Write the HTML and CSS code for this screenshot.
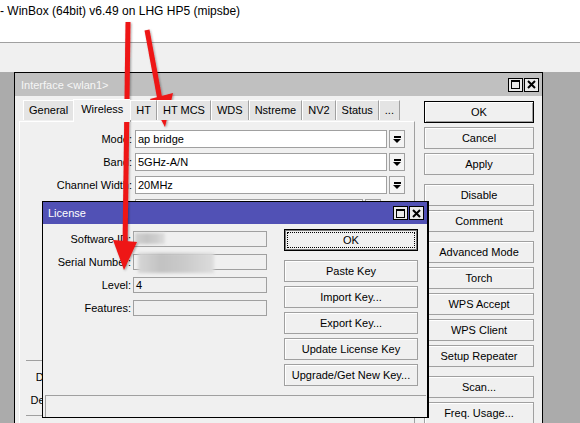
FILE: index.html
```html
<!DOCTYPE html>
<html lang="en">

<head>
    <meta charset="utf-8">
    <title>WinBox</title>
    <link rel="stylesheet" href="styles.css">
</head>

<body>
    <header class="app-title">- WinBox (64bit) v6.49 on LHG HP5 (mipsbe)</header>
    <div class="toolbar"></div>

    <main class="desktop">
        <section class="window iface">
            <div class="caption inactive">
                <span>Interface &lt;wlan1&gt;</span>
                <span class="caption-btns">
                    <i class="cbtn"><svg width="9" height="9" viewBox="0 0 9 9"><rect x="0.5" y="0.5" width="8" height="8" fill="none" stroke="#000"/><rect x="0" y="0" width="9" height="2"/></svg></i>
                    <i class="cbtn"><svg width="9" height="9" viewBox="0 0 9 9"><path d="M1 1L8 8M8 1L1 8" stroke="#000" stroke-width="2"/></svg></i>
                </span>
            </div>
            <div class="iface-body">
                <div class="tabs-area">
                    <ul class="tabs">
                        <li>General</li>
                        <li class="active">Wireless</li>
                        <li>HT</li>
                        <li>HT MCS</li>
                        <li>WDS</li>
                        <li>Nstreme</li>
                        <li>NV2</li>
                        <li>Status</li>
                        <li>...</li>
                    </ul>
                    <div class="panel">
                        <div class="row"><label>Mode:</label><div class="field">ap bridge</div><span class="drop"></span></div>
                        <div class="row"><label>Band:</label><div class="field">5GHz-A/N</div><span class="drop"></span></div>
                        <div class="row"><label>Channel Width:</label><div class="field">20MHz</div><span class="drop"></span></div>
                        <!-- rows under the license dialog are left blank -->
                        <div class="row"><label></label><div class="field short"></div><span class="drop"></span></div>
                        <div class="row"><label></label><div class="field"></div><span class="drop"></span></div>
                        <div class="row"><label></label><div class="field"></div><span class="drop"></span></div>
                        <div class="row"><label></label><div class="field"></div><span class="drop"></span></div>
                        <div class="row"><label></label><div class="field"></div><span class="drop"></span></div>
                        <div class="row"><label></label><div class="field"></div><span class="drop"></span></div>
                        <hr class="sep">
                        <div class="row"><label>Default AP Tx Limit:</label><div class="field"></div><span class="drop"></span></div>
                        <div class="row"><label>Default Authenticate:</label><div class="field"></div><span class="drop"></span></div>
                        <hr class="sep">
                    </div>
                </div>
                <div class="actions">
                    <button class="btn default">OK</button>
                    <button class="btn">Cancel</button>
                    <button class="btn">Apply</button>
                    <button class="btn group">Disable</button>
                    <button class="btn">Comment</button>
                    <button class="btn group">Advanced Mode</button>
                    <button class="btn">Torch</button>
                    <button class="btn">WPS Accept</button>
                    <button class="btn">WPS Client</button>
                    <button class="btn">Setup Repeater</button>
                    <button class="btn group">Scan...</button>
                    <button class="btn">Freq. Usage...</button>
                </div>
            </div>
        </section>

        <section class="window license">
            <div class="caption">
                <span>License</span>
                <span class="caption-btns">
                    <i class="cbtn"><svg width="9" height="9" viewBox="0 0 9 9"><rect x="0.5" y="0.5" width="8" height="8" fill="none" stroke="#000"/><rect x="0" y="0" width="9" height="2"/></svg></i>
                    <i class="cbtn"><svg width="9" height="9" viewBox="0 0 9 9"><path d="M1 1L8 8M8 1L1 8" stroke="#000" stroke-width="2"/></svg></i>
                </span>
            </div>
            <div class="license-body">
                <div class="license-main">
                    <div class="info">
                        <div class="info-row"><label>Software ID:</label><div class="ro"><span class="hidden-id"></span></div></div>
                        <div class="info-row"><label>Serial Number:</label><div class="ro"><span class="hidden-sn"></span></div></div>
                        <div class="info-row"><label>Level:</label><div class="ro">4</div></div>
                        <div class="info-row"><label>Features:</label><div class="ro"></div></div>
                    </div>
                    <div class="license-actions">
                        <button class="btn focused">OK</button>
                        <button class="btn group">Paste Key</button>
                        <button class="btn">Import Key...</button>
                        <button class="btn">Export Key...</button>
                        <button class="btn">Update License Key</button>
                        <button class="btn">Upgrade/Get New Key...</button>
                    </div>
                </div>
                <div class="statusbar"></div>
            </div>
        </section>
    </main>

    <!-- hand-drawn pointers -->
    <svg class="marks" width="580" height="423" viewBox="0 0 580 423">
        <defs>
            <filter id="shade" x="-20%" y="-20%" width="140%" height="140%">
                <feDropShadow dx="1" dy="1" stdDeviation="1" flood-color="#000" flood-opacity=".35"/>
            </filter>
        </defs>
        <g fill="#ee1414" stroke="#ee1414" filter="url(#shade)">
            <line x1="128" y1="22" x2="125" y2="248" stroke-width="5"/>
            <polygon points="113,240 137,242 124,270" stroke="none"/>
            <line x1="147" y1="30" x2="160" y2="100" stroke-width="5"/>
            <polygon points="150,99 173,93 165,127" stroke="none"/>
        </g>
    </svg>
</body>

</html>
```

FILE: styles.css
```css
body {
    margin: 0;
    width: 580px;
    height: 423px;
    overflow: hidden;
    font-family: "Liberation Sans", Arial, sans-serif;
    font-size: 11px;
    color: #000;
    background: #fff;
    position: relative;
}

.app-title {
    height: 39px;
    padding-top: 3px;
    font-size: 12px;
    line-height: 16px;
    border-bottom: 1px solid #a0a0a0;
    white-space: nowrap;
}

.toolbar {
    height: 29px;
    background: #f0f0f0;
}

.desktop {
    position: relative;
    height: 351px;
    background: #ababab;
    overflow: hidden;
}

/* MDI windows */
.window {
    position: absolute;
    background: #f0f0f0;
    border: 1px solid #000;
    display: flex;
    flex-direction: column;
}

.iface {
    left: 14px;
    top: 0;
    width: 527px;
    height: 420px;
}

.license {
    left: 42px;
    top: 129px;
    width: 384px;
    height: 215px;
    border-right-width: 2px;
}

.caption {
    height: 22px;
    flex: none;
    display: flex;
    align-items: center;
    justify-content: space-between;
    padding-left: 5px;
    padding-right: 3px;
    background: #5151b5;
    color: #fff;
}

.caption.inactive {
    height: 23px;
    background: #c0c0c0;
    color: #f6f6f6;
    padding-left: 6px;
}

.caption-btns {
    display: flex;
    gap: 1px;
}

.cbtn {
    width: 13px;
    height: 12px;
    border: 1px solid #000;
    background: #eaeaea;
    display: flex;
    align-items: center;
    justify-content: center;
}

/* interface window */
.iface-body {
    display: flex;
    padding: 1px 0 0 4px;
}

.tabs-area {
    width: 396px;
}

.tabs {
    list-style: none;
    margin: 0 0 0 4px;
    padding: 0;
    display: flex;
    align-items: flex-end;
    height: 24px;
    position: relative;
    z-index: 1;
}

.tabs li {
    height: 19px;
    line-height: 19px;
    padding: 0 5px;
    white-space: nowrap;
    background: #e4e4e4;
    border-top: 1px solid #fff;
    border-left: 1px solid #fff;
    border-right: 1px solid #a0a0a0;
    margin-bottom: 1px;
}

.tabs li.active {
    height: 22px;
    line-height: 19px;
    background: #f0f0f0;
    margin: 0 -1px -1px;
    padding: 0 7px;
}

.panel {
    border-top: 1px solid #fff;
    border-left: 1px solid #fff;
    border-right: 1px solid #a0a0a0;
    height: 320px;
    padding-top: 8px;
    display: flex;
    flex-direction: column;
    gap: 5px;
}

.row {
    display: flex;
    align-items: center;
    height: 18px;
}

.row label {
    width: 112px;
    text-align: right;
    white-space: nowrap;
    margin-right: 3px;
}

.field {
    width: 248px;
    height: 16px;
    line-height: 16px;
    padding-left: 2px;
    background: #fff;
    border: 1px solid #a0a0a0;
}

.field.short {
    width: 224px;
}

.drop {
    width: 14px;
    height: 16px;
    margin-left: 2px;
    border: 1px solid #a0a0a0;
    background: #f4f4f4;
    display: flex;
    flex-direction: column;
    align-items: center;
    justify-content: center;
}

.drop::before {
    content: "";
    width: 7px;
    height: 2px;
    background: #000;
    margin-bottom: 1px;
}

.drop::after {
    content: "";
    border-top: 4px solid #000;
    border-left: 4px solid transparent;
    border-right: 4px solid transparent;
}

.sep {
    margin: 23px 0 2px 6px;
    border: 0;
    border-top: 1px solid #a0a0a0;
}

.sep:last-child {
    margin-top: 1px;
}

.actions {
    display: flex;
    flex-direction: column;
    width: 110px;
    margin-left: 9px;
    padding-top: 4px;
}

/* buttons */
.btn {
    font: inherit;
    color: #000;
    height: 22px;
    padding: 0;
    background: #f0f0f0;
    border: 1px solid #a0a0a0;
    box-shadow: inset 1px 1px #fff;
    flex: none;
}

.btn + .btn {
    margin-top: 4px;
}

.btn.group {
    margin-top: 9px;
}

.btn.default {
    border-color: #000;
    box-shadow: inset 1px 1px #fff, inset -1px -1px #a0a0a0;
}

.btn.focused {
    position: relative;
    border-color: #000;
    box-shadow: inset 0 0 0 1px #7a7a7a;
}

.btn.focused::after {
    content: "";
    position: absolute;
    inset: 2px;
    border: 1px dotted #000;
}

/* license dialog */
.license-body {
    flex: 1;
    display: flex;
    flex-direction: column;
}

.license-main {
    flex: 1;
    display: flex;
}

.info {
    display: flex;
    flex-direction: column;
    gap: 7px;
    padding-top: 7px;
}

.info-row {
    display: flex;
    align-items: center;
    height: 16px;
}

.info-row label {
    width: 88px;
    text-align: right;
    margin-right: 2px;
    white-space: nowrap;
}

.ro {
    position: relative;
    width: 130px;
    height: 14px;
    line-height: 14px;
    padding-left: 2px;
    border: 1px solid #a0a0a0;
}

/* masked values */
.hidden-id,
.hidden-sn {
    position: absolute;
    background: linear-gradient(90deg, #d0d0d0, #c4c4c4 40%, #cdcdcd 70%, #dedede);
    filter: blur(1.5px);
}

.hidden-id {
    left: 1px;
    top: 1px;
    width: 30px;
    height: 11px;
}

.hidden-sn {
    left: 4px;
    top: -2px;
    width: 76px;
    height: 20px;
    background: linear-gradient(90deg, #d6d6d6, #c2c2c2 30%, #cacaca 60%, #dcdcdc);
}

.license-actions {
    display: flex;
    flex-direction: column;
    width: 134px;
    margin-left: 17px;
    padding-top: 5px;
}

.statusbar {
    height: 21px;
    margin: 0 1px 0 2px;
    border-top: 1px solid #a0a0a0;
    border-left: 1px solid #a0a0a0;
}

.marks {
    position: absolute;
    left: 0;
    top: 0;
    pointer-events: none;
}
```
